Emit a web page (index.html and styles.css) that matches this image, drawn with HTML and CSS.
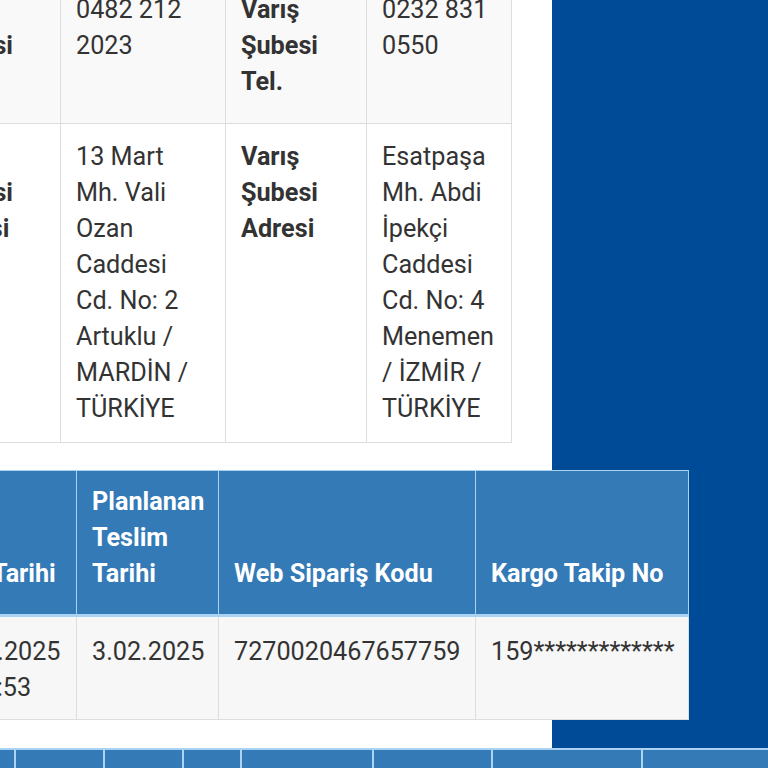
FILE: index.html
```html
<!DOCTYPE html>
<html lang="tr">
<head>
<meta charset="utf-8">
<title>Kargo Takip</title>
<link rel="stylesheet" href="styles.css">
</head>
<body>
<div class="page">
  <div class="panel">
    <table class="info">
      <colgroup><col class="i0"><col class="i1"><col class="i2"><col class="i3"></colgroup>
      <tr class="r1">
        <th>Çıkış Şubesi Tel.</th>
        <td>0482 212 2023</td>
        <th>Varış Şubesi Tel.</th>
        <td>0232 831 0550</td>
      </tr>
      <tr class="r2">
        <th>Çıkış Şubesi Adresi</th>
        <td>13 Mart Mh. Vali Ozan Caddesi Cd. No: 2 Artuklu / MARDİN / TÜRKİYE</td>
        <th>Varış Şubesi Adresi</th>
        <td>Esatpaşa Mh. Abdi İpekçi Caddesi Cd. No: 4 Menemen / İZMİR / TÜRKİYE</td>
      </tr>
    </table>
    <table class="orders">
      <colgroup><col class="o0"><col class="o1"><col class="o2"><col class="o3"></colgroup>
      <thead>
        <tr>
          <th>Alım Tarihi</th>
          <th>Planlanan Teslim Tarihi</th>
          <th>Web Sipariş Kodu</th>
          <th>Kargo Takip No</th>
        </tr>
      </thead>
      <tbody>
        <tr>
          <td>31.01.2025 16:14:53</td>
          <td>3.02.2025</td>
          <td>7270020467657759</td>
          <td>159*************</td>
        </tr>
      </tbody>
    </table>
  </div>
  <div class="strip">
    <span class="s s0"></span>
    <span class="s s1"></span>
    <span class="s s2"></span>
    <span class="s s3"></span>
    <span class="s s4"></span>
    <span class="s s5"></span>
    <span class="s s6"></span>
    <span class="s s7"></span>
  </div>
</div>
</body>
</html>
```
FILE: styles.css
```css
html, body {
  margin: 0;
  padding: 0;
}
body {
  background: #004b98;
  font-family: Roboto, "Liberation Sans", sans-serif;
  font-size: 25.2px;
  line-height: 36px;
  color: #333;
  overflow: hidden;
}
.page {
  width: 768px;
  height: 768px;
  overflow: hidden;
}
.panel {
  display: flow-root;
  width: 552px;
  height: 748px;
  background: #fff;
}
table {
  border-collapse: collapse;
  table-layout: fixed;
}
.info {
  width: 591px;
  margin-left: -80px;
  margin-top: -24px;
}
.info col.i0 { width: 140px; }
.info col.i1 { width: 165px; }
.info col.i2 { width: 141px; }
.info col.i3 { width: 145px; }
.info th, .info td {
  border: 1px solid #ddd;
  padding: 15px 15px;
  text-align: left;
  vertical-align: top;
}
.info th {
  font-weight: 700;
  color: #333;
}
.info .r1 th, .info .r1 td {
  background: #f9f9f9;
  height: 108px;
  padding-bottom: 23px;
}
.orders {
  width: 770px;
  margin-left: -82px;
  margin-top: 27px;
}
.orders col.o0 { width: 158px; }
.orders col.o1 { width: 142px; }
.orders col.o2 { width: 257px; }
.orders col.o3 { width: 213px; }
.orders thead th {
  background: #337ab7;
  color: #fff;
  font-weight: 700;
  text-align: left;
  vertical-align: bottom;
  padding: 13px 15px 22px;
  border: 1px solid #a9d2f3;
  border-bottom: 3px solid #a9d2f3;
}
.orders tbody td {
  background: #f7f7f7;
  padding: 17px 15px 13px;
  vertical-align: top;
  border: 1px solid #ddd;
  border-top: 0;
}
.strip {
  display: flex;
  height: 18px;
  background: #337ab7;
  border-top: 2px solid #a9d2f3;
}
.s {
  display: block;
  flex: none;
  border-left: 2px solid #a9d2f3;
}
.s0 { width: 14px; border-left: 0; }
.s1 { width: 87px; }
.s2 { width: 77px; }
.s3 { width: 56px; }
.s4 { width: 130px; }
.s5 { width: 117px; }
.s6 { width: 148px; }
.s7 { flex: 1; }
```
